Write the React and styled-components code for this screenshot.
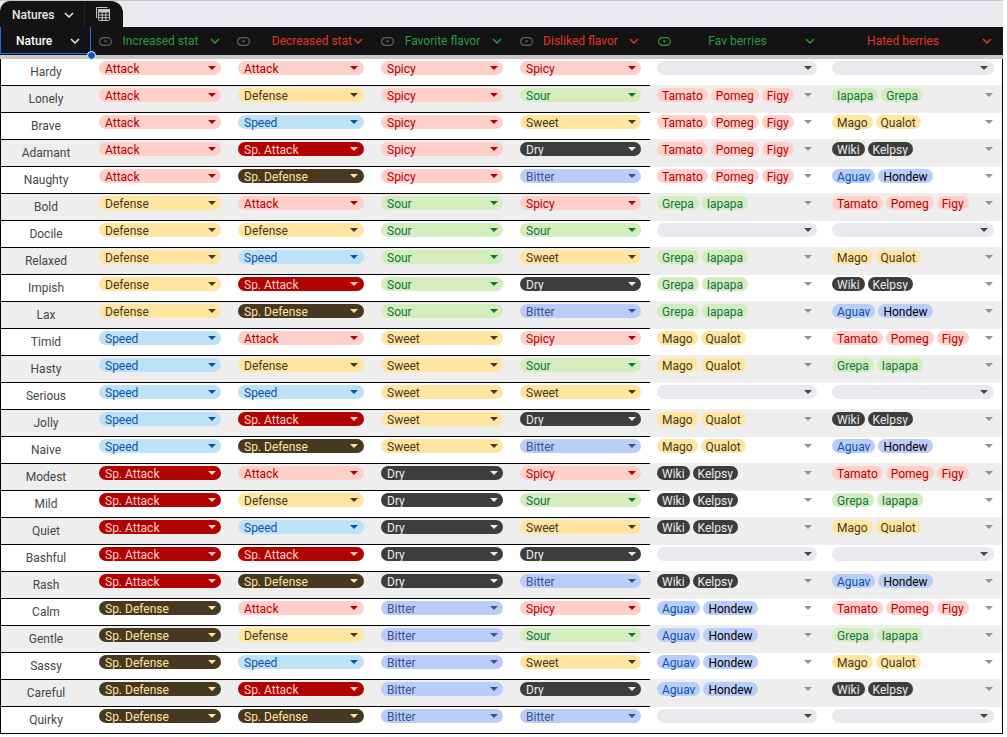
import React from "react";
import styled, { createGlobalStyle } from "styled-components";

const GlobalStyle = createGlobalStyle`
  html, body { margin: 0; padding: 0; background: #fff; overflow: hidden; }
  body { font-family: Roboto, "Liberation Sans", sans-serif; font-size: 12px; }
`;

const palette = {
  red: { bg: "#ffcfc9", fg: "#b10202" },
  yellow: { bg: "#ffe5a0", fg: "#473821" },
  green: { bg: "#d4edbc", fg: "#11734b" },
  blue: { bg: "#bfe1f6", fg: "#0a53a8" },
  darkRed: { bg: "#b10202", fg: "#ffcfc9" },
  brown: { bg: "#473821", fg: "#ffe5a0" },
  dark: { bg: "#3d3d3d", fg: "#e8eaed" },
  bitter: { bg: "#bacdf8", fg: "#3f4f93" },
  aguav: { bg: "#bacdf8", fg: "#0a53a8" },
  hondew: { bg: "#bacdf8", fg: "#000000" },
  empty: { bg: "#e8eaed", fg: "#444746" },
};

const COLS = "91px 139px 143px 139px 138px 175px 178px";
const ROW_COLS = "90px 139px 143px 139px 138px 175px 177px";

const Sheet = styled.div`
  width: 1003px;
`;
const TabStrip = styled.div`
  height: 26px;
  border-top: 1px solid #c7c7c7;
  background: #e8eaed;
  display: flex;
  align-items: flex-end;
`;
const Tab = styled.div`
  width: 123px;
  height: 26px;
  background: #131313;
  border-radius: 10px 12px 0 0;
  display: flex;
`;
const TabName = styled.div`
  width: 85px;
  box-sizing: border-box;
  padding: 2px 9px 0 12px;
  display: flex;
  align-items: center;
  justify-content: space-between;
  color: #e8eaed;
  font-weight: 500;
  border-right: 1px solid #232323;
`;
const TabIcon = styled.div`
  flex: 1;
  display: flex;
  align-items: center;
  justify-content: center;
  padding-right: 2px;
`;
const HeaderRow = styled.div`
  position: relative;
  display: grid;
  grid-template-columns: ${COLS};
  height: 28px;
  line-height: 14px;
  background: #131313;
`;
const NatureHead = styled.div`
  box-sizing: border-box;
  height: 27px;
  border: 1px solid #1a6fe0;
  border-top: 0;
  display: flex;
  align-items: center;
  justify-content: space-between;
  padding: 1px 9px 0 15px;
  color: #fff;
  font-weight: 500;
`;
const SelectHandle = styled.span`
  position: absolute;
  left: 87px;
  top: 24px;
  width: 7px;
  height: 7px;
  border-radius: 50%;
  background: #0b57d0;
  border: 1px solid #fff;
`;
const HeadCell = styled.div`
  display: flex;
  align-items: center;
  padding: 0 ${(p) => p.$right}px 0 ${(p) => p.$left}px;
  color: ${(p) => p.$color};
`;
const HeadLabel = styled.span`
  flex: 1;
  min-width: 0;
  white-space: nowrap;
  text-align: ${(p) => p.$align || "center"};
`;
const GreyBar = styled.div`
  height: 4px;
  background: #c7c7c7;
`;
const Body = styled.div`
  box-sizing: border-box;
  width: 1003px;
  border-left: 1px solid #000;
  border-right: 1px solid #000;
  border-bottom: 1px solid #000;
`;
const Row = styled.div`
  display: grid;
  grid-template-columns: ${ROW_COLS};
  height: 27px;
  &:last-child { height: 26px; }
`;
const NameCell = styled.div`
  box-sizing: border-box;
  height: 27px;
  border-bottom: 1px solid #000;
  background: ${(p) => (p.$shade ? "#eeeeee" : "#fff")};
  color: #444746;
  display: flex;
  justify-content: center;
  align-items: center;
  ${Row}:last-child & { border-bottom: 0; height: 26px; }
`;
const StatCell = styled.div`
  box-sizing: border-box;
  height: 27px;
  padding: 2px 9px 0 8px;
  border-bottom: 1px solid #000;
  background: ${(p) => (p.$shade ? "#eeeeee" : "#fff")};
  ${Row}:last-child & { border-bottom: 0; height: 26px; }
`;
const BerryCell = styled.div`
  box-sizing: border-box;
  height: 28px;
  margin-top: -1px;
  padding: 3px 8px 0 7px;
  background: ${(p) => (p.$shade ? "#eeeeee" : "transparent")};
  ${Row}:last-child & { height: 27px; }
`;
const Pill = styled.div`
  box-sizing: border-box;
  height: 14px;
  border-radius: 7px;
  padding: 2px ${(p) => p.$pad || 5}px 0 6px;
  display: flex;
  align-items: center;
  justify-content: space-between;
  line-height: 14px;
  background: ${(p) => palette[p.$tone].bg};
  color: ${(p) => palette[p.$tone].fg};
`;
const Caret = styled.span`
  width: 0;
  height: 0;
  flex: none;
  margin-top: ${(p) => (p.$flat ? 0 : -2)}px;
  border-left: 4px solid transparent;
  border-right: 4px solid transparent;
  border-top: 4px solid ${(p) => p.$color || "currentColor"};
`;
const BerryField = styled.div`
  display: flex;
  align-items: center;
  height: 14px;
  gap: 3px;
  padding-right: 5px;
  margin-right: ${(p) => (p.$wide ? -4 : 0)}px;
`;
const EmptyField = styled(Pill)`
  padding-right: ${(p) => p.$pad}px;
  justify-content: flex-end;
`;
const Chip = styled.span`
  box-sizing: border-box;
  height: 14px;
  line-height: 16px;
  border-radius: 7px;
  padding: 0 5px;
  font-size: 12px;
  white-space: nowrap;
  background: ${(p) => palette[p.$tone].bg};
  color: ${(p) => palette[p.$tone].fg};
`;
const Spacer = styled.span`
  flex: 1;
`;

const Chevron = ({ color }) => (
  <svg width="12" height="12" viewBox="0 0 12 12" fill="none" stroke={color} strokeWidth="1.5" style={{ flex: "none" }}>
    <path d="M2 4l4 4 4-4" />
  </svg>
);
const ChipIcon = ({ color }) => (
  <svg width="13" height="9" viewBox="0 0 13 9" fill="none" style={{ flex: "none" }}>
    <rect x=".6" y=".6" width="11.8" height="7.8" rx="3.9" stroke={color} strokeWidth="1.2" />
    <path d="M4.5 3.4h4L6.5 5.6z" fill={color} />
  </svg>
);
const TablesIcon = () => (
  <svg width="16" height="16" viewBox="0 0 16 16" fill="none" stroke="#c4c7c5">
    <path d="M1.5 12V1.5H12.5" strokeWidth="1" />
    <rect x="3.5" y="3.5" width="11" height="11" rx="1" strokeWidth="1" />
    <path d="M3.5 3.5h11v2.5h-11z" fill="#c4c7c5" strokeWidth="1" />
    <path d="M3.5 9h11M3.5 11.8h11M7.2 6v8.5M10.8 6v8.5" strokeWidth="1" />
  </svg>
);

const NATURES = ["Hardy","Lonely","Brave","Adamant","Naughty","Bold","Docile","Relaxed","Impish","Lax","Timid","Hasty","Serious","Jolly","Naive","Modest","Mild","Quiet","Bashful","Rash","Calm","Gentle","Sassy","Careful","Quirky"];
const STATS = [["Attack","red"],["Defense","yellow"],["Speed","blue"],["Sp. Attack","darkRed"],["Sp. Defense","brown"]];
const FLAVORS = [["Spicy","red"],["Sour","green"],["Sweet","yellow"],["Dry","dark"],["Bitter","bitter"]];
const BERRIES = [
  [["Tamato","red"],["Pomeg","red"],["Figy","red"]],
  [["Grepa","green"],["Iapapa","green"]],
  [["Mago","yellow"],["Qualot","yellow"]],
  [["Wiki","dark"],["Kelpsy","dark"]],
  [["Aguav","aguav"],["Hondew","hondew"]],
];
const GREEN = "#2a9a3f";
const RED = "#e0362c";
const DIM = "#5f6368";

const HEADS = [
  { label: "Increased stat", color: GREEN, left: 8, right: 9 },
  { label: "Decreased stat", color: RED, left: 7, right: 9, align: "right" },
  { label: "Favorite flavor", color: GREEN, left: 8, right: 9 },
  { label: "Disliked flavor", color: RED, left: 8, right: 10 },
  { label: "Fav berries", color: GREEN, left: 8, right: 9, iconColor: GREEN },
  { label: "Hated berries", color: RED, left: 0, right: 10, noIcon: true },
];

const Select = ({ item, pad }) => (
  <Pill $tone={item[1]} $pad={pad}>
    {item[0]}
    <Caret />
  </Pill>
);

const Berries = ({ list, wide, emptyPad }) =>
  list ? (
    <BerryField $wide={wide}>
      {list.map(([n, t]) => (
        <Chip key={n} $tone={t}>{n}</Chip>
      ))}
      <Spacer />
      <Caret $flat $color="#8f9296" />
    </BerryField>
  ) : (
    <EmptyField $tone="empty" $pad={emptyPad}>
      <Caret />
    </EmptyField>
  );

export default function App() {
  return (
    <Sheet>
      <GlobalStyle />
      <TabStrip>
        <Tab>
          <TabName>
            Natures
            <Chevron color="#e8eaed" />
          </TabName>
          <TabIcon>
            <TablesIcon />
          </TabIcon>
        </Tab>
      </TabStrip>
      <HeaderRow>
        <NatureHead>
          Nature
          <Chevron color="#e8eaed" />
        </NatureHead>
        {HEADS.map((h) => (
          <HeadCell key={h.label} $color={h.color} $left={h.left} $right={h.right}>
            {!h.noIcon && <ChipIcon color={h.iconColor || DIM} />}
            <HeadLabel $align={h.align}>{h.label}</HeadLabel>
            <Chevron color={h.color} />
          </HeadCell>
        ))}
        <SelectHandle />
      </HeaderRow>
      <GreyBar />
      <Body>
        {NATURES.map((name, k) => {
          const inc = Math.floor(k / 5);
          const dec = k % 5;
          const shade = k % 2 === 1;
          const fav = inc === dec ? null : BERRIES[inc];
          let hate = inc === dec ? null : BERRIES[dec];
          if (name === "Lonely") hate = [hate[1], hate[0]];
          return (
            <Row key={name}>
              <NameCell $shade={shade}>{name}</NameCell>
              <StatCell $shade={shade}><Select item={STATS[inc]} /></StatCell>
              <StatCell $shade={shade}><Select item={STATS[dec]} pad={6} /></StatCell>
              <StatCell $shade={shade}><Select item={FLAVORS[inc]} /></StatCell>
              <StatCell $shade={shade}><Select item={FLAVORS[dec]} pad={5} /></StatCell>
              <BerryCell $shade={shade}><Berries list={fav} emptyPad={5} /></BerryCell>
              <BerryCell $shade={shade}><Berries list={hate} wide emptyPad={6} /></BerryCell>
            </Row>
          );
        })}
      </Body>
    </Sheet>
  );
}
